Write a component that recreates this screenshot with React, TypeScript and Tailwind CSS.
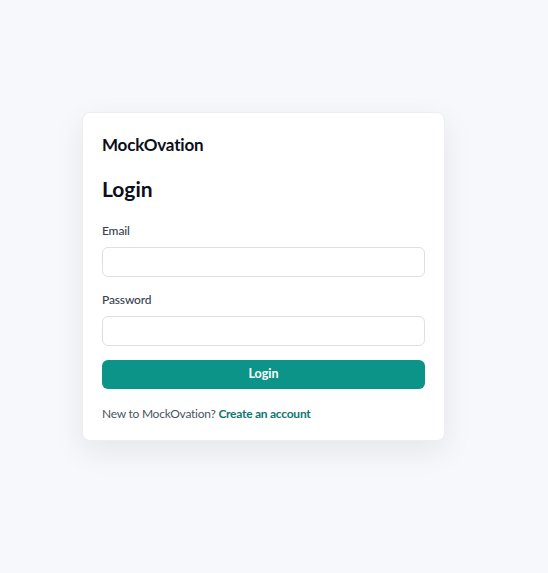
import React from "react";

export default function App() {
  return (
    <div
      className="min-h-screen w-full bg-[#f7f8fb] flex items-center justify-center pr-[21px] pb-[20px] [font-variant-ligatures:none]"
      style={{ fontFamily: "Lato, 'Noto Sans', sans-serif" }}
    >
      <div className="w-[363px] bg-white rounded-lg border border-[#eceef2] shadow-[0_10px_30px_rgba(15,23,42,0.08)] px-[19px] pt-[20px] pb-[16px]">
        <div className="text-[17px] leading-[24px] font-bold tracking-[-0.2px] text-[#0b0f19]">MockOvation</div>
        <h1 className="mt-[18px] text-[21px] leading-[28px] font-bold text-[#0b0f19]">Login</h1>
        <form className="mt-[18px]" onSubmit={(e) => e.preventDefault()}>
          <label className="block text-[12px] leading-[20px] font-medium tracking-[-0.15px] text-[#374151]">Email</label>
          <input
            type="email"
            className="mt-[6px] block w-full h-[30px] rounded-md border border-[#dcdfe4] bg-white px-3 text-sm outline-none"
          />
          <label className="mt-[13px] block text-[12px] leading-[20px] font-medium tracking-[-0.15px] text-[#374151]">Password</label>
          <input
            type="password"
            className="mt-[6px] block w-full h-[30px] rounded-md border border-[#dcdfe4] bg-white px-3 text-sm outline-none"
          />
          <button
            type="submit"
            className="mt-[14px] w-full h-[29px] rounded-md bg-[#0d9488] text-white text-[12.5px] font-bold"
          >
            Login
          </button>
        </form>
        <p className="mt-[15px] text-[12px] leading-[20px] tracking-[-0.25px] text-[#4b5563]">
          New to MockOvation?{" "}
          <a href="#" className="font-bold text-[#0f766e]">
            Create an account
          </a>
        </p>
      </div>
    </div>
  );
}
